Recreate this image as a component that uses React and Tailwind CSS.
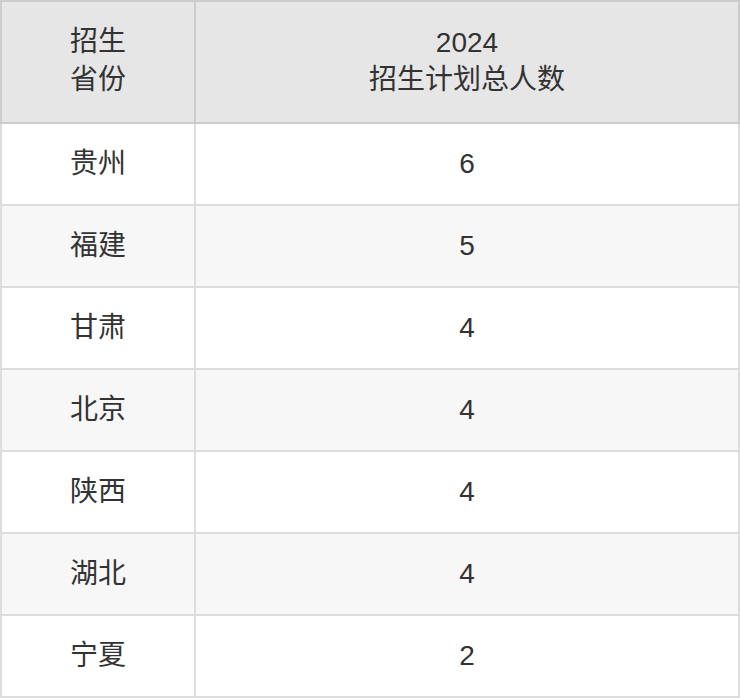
import React from "react";

const rows = [
  ["贵州", "6"],
  ["福建", "5"],
  ["甘肃", "4"],
  ["北京", "4"],
  ["陕西", "4"],
  ["湖北", "4"],
  ["宁夏", "2"],
];

export default function App() {
  return (
    <div
      className="w-[740px] text-[#333] text-[28px]"
      style={{ fontFamily: '"Liberation Sans", "Noto Sans CJK SC", sans-serif' }}
    >
      <div className="flex h-[124px] border-2 border-[#cccccc] bg-[#e6e6e6]">
        <div className="w-[194px] border-r-2 border-[#cccccc] flex flex-col items-center justify-center leading-[38px] pb-[3px]">
          <div>招生</div>
          <div>省份</div>
        </div>
        <div className="flex-1 flex flex-col items-center justify-center leading-[37px] pb-[3px]">
          <div>2024</div>
          <div>招生计划总人数</div>
        </div>
      </div>
      {rows.map(([p, n], i) => (
        <div
          key={p}
          className={`flex h-[82px] border-x-2 border-b-2 border-[#dddddd] ${
            i % 2 === 1 ? "bg-[#f7f7f7]" : "bg-white"
          }`}
        >
          <div className="w-[194px] border-r-2 border-[#dddddd] flex items-center justify-center">
            {p}
          </div>
          <div className="flex-1 flex items-center justify-center">{n}</div>
        </div>
      ))}
    </div>
  );
}
